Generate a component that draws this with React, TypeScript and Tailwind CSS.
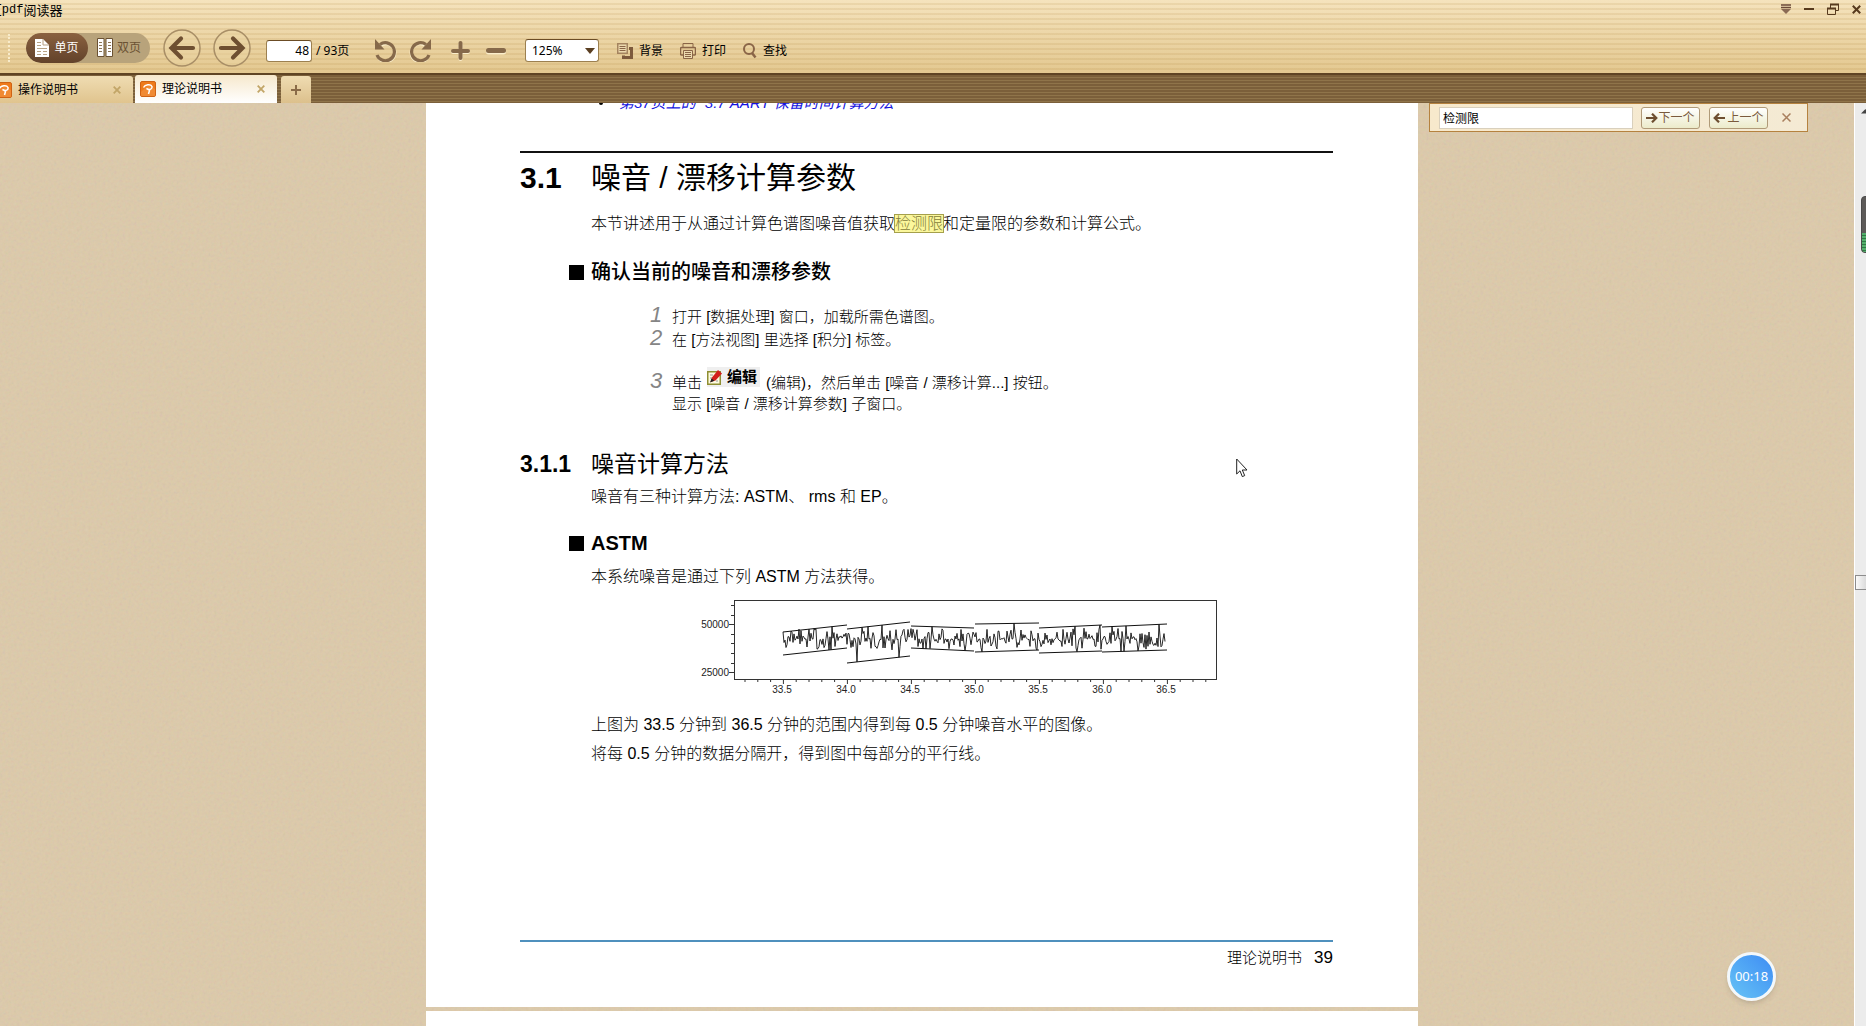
import React from "react";

const UI = "font-['Noto_Sans','Noto_Sans_CJK_SC',sans-serif]";
const DOC = "font-['Liberation_Sans','Noto_Sans_CJK_SC',sans-serif]";

/* ---------- toolbar icons ---------- */

function SinglePageIcon() {
  return (
    <svg width="14" height="18" viewBox="0 0 14 18">
      <path d="M0 0H8L14 6V18H0Z" fill="#fff" />
      <path d="M8 0V6H14" fill="none" stroke="#b79f83" />
      <path d="M2 3.5H6M2 6.5H6M2 9.5H12M2 12.5H6M8 12.5H12M2 15.5H6M8 15.5H12" stroke="#b8a285" />
    </svg>
  );
}

function DoublePageIcon() {
  return (
    <svg width="16" height="19" viewBox="0 0 16 19">
      <path d="M.5 .5H7V18.5H.5ZM9 .5H15.5V18.5H9Z" fill="#fff" stroke="#6b5233" />
      <path d="M2 4.5H5M2 7.5H5M2 10.5H5M2 13.5H5M11 4.5H14M11 7.5H14M11 10.5H14M11 13.5H14" stroke="#8a7454" />
    </svg>
  );
}

function ArrowCircle({ flip, label }: { flip?: boolean; label: string }) {
  return (
    <button aria-label={label} className="h-[38px] w-[38px]">
      <svg width="38" height="38" viewBox="0 0 38 38" className={flip ? "rotate-180" : ""}>
        <circle cx="19" cy="19" r="18" fill="#e9d3a2" fillOpacity=".5" stroke="#a88e66" strokeWidth="1.5" />
        <path d="M30 19H10M18 9.500L8.500 19L18 28.500" fill="none" stroke="#6e4f31" strokeWidth="4.200" strokeLinecap="round" strokeLinejoin="miter" />
      </svg>
    </button>
  );
}

function RotateIcon({ flip }: { flip?: boolean }) {
  return (
    <svg width="23" height="23" viewBox="0 0 23 23" className={flip ? "-scale-x-100" : ""}>
      <path d="M5.500 5.500A9 9 0 1 1 2.500 16" fill="none" stroke="#fbeecb" strokeWidth="3" transform="translate(0 1)" />
      <path d="M5 5.500A9 9 0 1 1 2 16" fill="none" stroke="#86694a" strokeWidth="3.200" />
      <path d="M0 0L0 10.500H9.500Z" fill="#86694a" />
    </svg>
  );
}

function PlusIcon() {
  return (
    <svg width="19" height="20" viewBox="0 0 19 20">
      <path d="M2 11H17M9.500 3V18" stroke="#fbeecb" strokeWidth="4" strokeLinecap="round" />
      <path d="M2 10H17M9.500 2V17" stroke="#86694a" strokeWidth="4" strokeLinecap="round" />
    </svg>
  );
}

function MinusIcon() {
  return (
    <svg width="20" height="8" viewBox="0 0 20 8">
      <path d="M2.500 5H17.500" stroke="#fbeecb" strokeWidth="5" strokeLinecap="round" />
      <path d="M2.500 3.500H17.500" stroke="#86694a" strokeWidth="5" strokeLinecap="round" />
    </svg>
  );
}

function BackgroundIcon() {
  return (
    <svg width="16" height="16" viewBox="0 0 16 16" fill="none">
      <path d="M12 5.500H14.500V14.500H6.500V12.500" stroke="#7d5a3c" strokeWidth="3" />
      <rect x=".75" y=".75" width="9.500" height="9.500" fill="#ecd9ae" stroke="#a5845f" strokeWidth="1.500" />
      <path d="M2.500 3.500H8.500M2.500 5.500H8.500M2.500 7.500H8.500" stroke="#8a6547" />
    </svg>
  );
}

function PrintIcon() {
  return (
    <svg width="16" height="16" viewBox="0 0 16 16" fill="none" stroke="#8a6547">
      <path d="M3 4V.5H13V4" />
      <path d="M3.500 12H1.500A1 1 0 0 1 .5 11V5.500A1 1 0 0 1 1.500 4.500H14.500A1 1 0 0 1 15.500 5.500V11A1 1 0 0 1 14.500 12H12.500" strokeWidth="1.500" />
      <path d="M3.500 7.500H12.500V15.500H3.500Z" fill="#ecd9ae" />
      <path d="M5 9.500H11M5 11.500H11M5 13.500H11" />
    </svg>
  );
}

function FindIcon() {
  return (
    <svg width="14" height="16" viewBox="0 0 14 16" fill="none" stroke="#8a6547">
      <circle cx="6" cy="6" r="5" strokeWidth="2" />
      <path d="M9 10L12.500 14.500" strokeWidth="2.500" />
    </svg>
  );
}

function TabLogo() {
  return (
    <svg width="16" height="16" viewBox="0 0 16 16" className="shrink-0">
      <rect x=".5" y=".5" width="15" height="15" rx="1.500" fill="#ee7a1b" stroke="#cf6314" />
      <path d="M1 11L8 4L15 8V15H1Z" fill="#f29a4c" opacity=".5" />
      <path d="M3.500 6.500C5 3.500 10.500 2.500 12 5.500C12.500 8 10 9.500 6.500 7.500L9.500 9.500L8.500 13" fill="none" stroke="#fff" strokeWidth="1.500" />
    </svg>
  );
}

function Cross({ color, size = 8 }: { color: string; size?: number }) {
  return (
    <svg width={size} height={size} viewBox="0 0 8 8">
      <path d="M.7 .7L7.300 7.300M7.300 .7L.7 7.300" stroke={color} strokeWidth="1.800" />
    </svg>
  );
}

function StepArrow({ back }: { back?: boolean }) {
  return (
    <svg width="12" height="10" viewBox="0 0 12 10" className={back ? "rotate-180" : ""}>
      <path d="M0 5H10M6 .7L10.300 5L6 9.300" fill="none" stroke="#6e4f31" strokeWidth="2.200" />
    </svg>
  );
}

/* ---------- chrome ---------- */

function TitleBar() {
  return (
    <div className="flex h-[22px] items-start justify-between pr-[5px]">
      <div className="-ml-[5px] flex text-[13px] leading-5 text-black">
        <span className="font-['Liberation_Mono',monospace]">[</span>
        <span className="-ml-px font-['Liberation_Mono',monospace] text-xs leading-5">pdf</span>
        <span>阅读器</span>
      </div>
      <div className="flex h-[18px] items-center gap-[13px]">
        <button aria-label="菜单">
          <svg width="10" height="10" viewBox="0 0 10 10">
            <path d="M0 1H10M0 3.500H10" stroke="#6b4a3a" strokeWidth="1.500" />
            <path d="M0 5H10L5 10Z" fill="#8a6a55" />
          </svg>
        </button>
        <button aria-label="最小化">
          <svg width="10" height="10" viewBox="0 0 10 10">
            <path d="M0 5H10" stroke="#573a1e" strokeWidth="2" />
          </svg>
        </button>
        <button aria-label="还原">
          <svg width="12" height="12" viewBox="0 0 12 12" fill="none" stroke="#573a1e">
            <path d="M3.500 5V1.500H11.500V7.500H9" />
            <path d="M3 1.500H12" strokeWidth="2" />
            <path d="M.5 5.500H8.500V11.500H.5Z" />
            <path d="M0 5.500H9" strokeWidth="2" />
          </svg>
        </button>
        <button aria-label="关闭">
          <Cross color="#573a1e" size={9} />
        </button>
      </div>
    </div>
  );
}

function ToolButton({ icon, text }: { icon: React.ReactNode; text: string }) {
  return (
    <button className="flex items-center gap-[6px] text-black">
      {icon}
      <span>{text}</span>
    </button>
  );
}

function Toolbar() {
  return (
    <div className="flex h-[51px] items-center pl-2 text-xs">
      <div className="h-7 border-l-2 border-dotted border-[#f8ebca]" />
      <div className="ml-4 flex h-[30px] overflow-hidden rounded-full bg-[#b8a37b]">
        <button className="flex w-[62px] items-center justify-center gap-[5px] rounded-full bg-linear-to-b from-[#8a6140] to-[#62422a] text-white">
          <SinglePageIcon />
          单页
        </button>
        <button className="flex w-[62px] items-center justify-center gap-1 text-[#6b5233]">
          <DoublePageIcon />
          双页
        </button>
      </div>
      <div className="ml-[13px] flex gap-3">
        <ArrowCircle label="后退" />
        <ArrowCircle label="前进" flip />
      </div>
      <div className="ml-[15px] flex items-center pt-[6px]">
        <input
          aria-label="页码"
          defaultValue="48"
          className="h-[22px] w-[46px] rounded-[3px] border border-[#9c8050] border-t-[#6b4c25] bg-white pr-[2px] text-right text-xs text-black outline-none"
        />
        <span className="ml-1 w-[36px] whitespace-nowrap">/ 93页</span>
        <button aria-label="向左旋转" className="ml-[23px]">
          <RotateIcon />
        </button>
        <button aria-label="向右旋转" className="ml-[10px]">
          <RotateIcon flip />
        </button>
        <button aria-label="放大" className="ml-5">
          <PlusIcon />
        </button>
        <button aria-label="缩小" className="ml-4">
          <MinusIcon />
        </button>
        <div className="relative ml-[19px]">
          <select
            aria-label="缩放比例"
            defaultValue="125%"
            className="h-[23px] w-[74px] appearance-none rounded-[3px] border border-[#9c8050] border-t-[#6b4c25] bg-white pl-[6px] text-xs text-black outline-none"
          >
            <option>100%</option>
            <option>125%</option>
            <option>150%</option>
          </select>
          <svg width="10" height="6" viewBox="0 0 10 6" className="pointer-events-none absolute top-[9px] right-1">
            <path d="M0 0H10L5 6Z" fill="#5a3f22" />
          </svg>
        </div>
        <div className="ml-[18px] flex items-center gap-[17px]">
          <ToolButton icon={<BackgroundIcon />} text="背景" />
          <ToolButton icon={<PrintIcon />} text="打印" />
          <ToolButton icon={<FindIcon />} text="查找" />
        </div>
      </div>
    </div>
  );
}

function Tab({ title, active }: { title: string; active?: boolean }) {
  return (
    <div
      className={
        active
          ? "flex h-[28px] w-[142px] items-center rounded-t-[3px] bg-linear-to-b from-[#f6e8cc] to-white pr-3 pl-[5px]"
          : "flex h-[27px] w-[142px] items-center rounded-t-[3px] bg-linear-to-b from-[#efdcb2] to-[#e0c48e] pr-3 pl-[5px]"
      }
    >
      <button className="flex flex-1 items-center gap-[6px] text-xs text-black">
        <TabLogo />
        {title}
      </button>
      <button aria-label={"关闭" + title}>
        <Cross color="#c2a567" />
      </button>
    </div>
  );
}

function TabBar() {
  return (
    <div className="flex h-[30px] items-end gap-[2px] overflow-hidden border-t-2 border-[#5f4424] bg-[repeating-linear-gradient(to_bottom,#7b5f3a_0px,#7b5f3a_2px,#8f744a_2px,#8f744a_3px)]">
      <div className="-ml-[9px] flex items-end gap-[2px]">
        <Tab title="操作说明书" />
        <Tab title="理论说明书" active />
      </div>
      <button
        aria-label="新建标签"
        className="ml-[2px] flex h-[27px] w-[30px] items-center justify-center rounded-t-[3px] bg-linear-to-b from-[#efdcb2] to-[#dcc08c]"
      >
        <svg width="10" height="10" viewBox="0 0 10 10">
          <path d="M0 5H10M5 0V10" stroke="#8a6b48" strokeWidth="2" />
        </svg>
      </button>
    </div>
  );
}

function SearchPanel() {
  const btn =
    "flex h-[22px] w-[59px] items-center justify-center rounded-[3px] border border-[#b09a78] bg-linear-to-b from-white to-[#ecebca] text-xs text-[#7a5a3c]";
  return (
    <div className="absolute top-0 right-[58px] flex h-[29px] w-[379px] items-center border border-[#b5823f] bg-linear-to-r from-[#f7e9cc] to-[#f4ead4] pl-[9px]">
      <input
        aria-label="查找内容"
        defaultValue="检测限"
        className="h-[22px] w-[194px] border border-[#d9d0bd] bg-white pl-[3px] text-xs text-black outline-none"
      />
      <button className={btn + " ml-2"}>
        <StepArrow />
        下一个
      </button>
      <button className={btn + " ml-[9px] gap-[2px]"}>
        <StepArrow back />
        上一个
      </button>
      <button aria-label="关闭查找" className="ml-[14px]">
        <svg width="9" height="9" viewBox="0 0 9 9">
          <path d="M.5 .5L8.500 8.500M8.500 .5L.5 8.500" stroke="#a97f5e" strokeWidth="1.500" />
        </svg>
      </button>
    </div>
  );
}

function ScrollBar() {
  return (
    <div className="relative w-3 shrink-0 overflow-hidden border-l border-white bg-[#ececec]">
      <svg width="8" height="5" viewBox="0 0 8 5" className="absolute top-[6px] left-[6px]">
        <path d="M0 4.500L4.500 0L9 4.500Z" fill="#444" />
      </svg>
      <div className="absolute top-[472px] left-0 h-[15px] w-4 border border-[#8c8c8c] bg-linear-to-r from-[#fafafa] to-[#cfcfcf]" />
      <div className="absolute top-[93px] left-[6px] flex h-[57px] w-3 flex-col justify-end overflow-hidden rounded-[4px] border border-[#4a4a4a] bg-[#5c5a58]">
        <div className="h-[19px] bg-[repeating-linear-gradient(to_bottom,#54b06c_0px,#54b06c_2px,#2f7a45_2px,#2f7a45_3px)]" />
      </div>
    </div>
  );
}

/* ---------- noise chart ---------- */

type Segment = {
  x0: number;
  x1: number;
  top: [number, number];
  bottom: [number, number];
  up: number[];
  down: number[];
};

const SEGMENTS: Segment[] = [
  { x0: 88, x1: 152, top: [35, 28], bottom: [58, 51], up: [96, 114, 119, 137], down: [134, 136] },
  { x0: 152, x1: 215, top: [32, 25], bottom: [66, 59], up: [167, 173, 187], down: [162, 204] },
  { x0: 216, x1: 279, top: [29, 31], bottom: [51, 54], up: [237], down: [228, 270] },
  { x0: 280, x1: 344, top: [27, 26], bottom: [55, 53], up: [319], down: [287, 342] },
  { x0: 344, x1: 407, top: [31, 28], bottom: [56, 54], up: [380, 405], down: [382] },
  { x0: 407, x1: 472, top: [30, 27], bottom: [55, 53], up: [417, 431, 464], down: [426, 429, 443] },
];

function noisePath() {
  let seed = 97;
  const rnd = () => {
    seed = (seed * 16807) % 2147483647;
    return seed / 2147483647;
  };
  const points: string[] = [];
  let sign = 1;
  for (let x = 88; x <= 470; x += 1) {
    const seg = SEGMENTS.find((s) => x >= s.x0 && x < s.x1) ?? SEGMENTS[5];
    const t = (x - seg.x0) / (seg.x1 - seg.x0);
    if (seg.up.includes(x)) {
      points.push(x + "," + (seg.top[0] + (seg.top[1] - seg.top[0]) * t).toFixed(1));
    } else if (seg.down.includes(x)) {
      points.push(x + "," + (seg.bottom[0] + (seg.bottom[1] - seg.bottom[0]) * t).toFixed(1));
    } else {
      if (rnd() < 0.5) sign = -sign;
      points.push(x + "," + (42 + sign * Math.pow(rnd(), 1.6) * 11).toFixed(1));
    }
  }
  return "M" + points.join("L");
}

const NOISE = noisePath();
const X_LABELS = ["33.5", "34.0", "34.5", "35.0", "35.5", "36.0", "36.5"];
const X_TICKS = Array.from({ length: 37 }, (_, i) => 50 + i * 12.8);

function NoiseChart() {
  return (
    <svg width="530" height="100" viewBox="0 0 530 100" role="img" aria-label="噪音图" className="mt-2 ml-[104px]">
      <rect x="39.500" y="3.500" width="482" height="79" fill="none" stroke="#333" />
      <g stroke="#333">
        {[8, 18, 37, 46, 56, 66].map((y) => (
          <path key={y} d={`M36 ${y}.5H39`} />
        ))}
        <path d="M34 27.500H39M34 75.500H39" />
        {X_TICKS.map((x, i) => (
          <path key={i} d={`M${x} 83V${i % 5 === 3 ? 87 : 85}`} />
        ))}
      </g>
      <g stroke="#111" fill="none">
        {SEGMENTS.map((s) => (
          <path key={s.x0} d={`M${s.x0} ${s.top[0]}L${s.x1} ${s.top[1]}M${s.x0} ${s.bottom[0]}L${s.x1} ${s.bottom[1]}`} />
        ))}
        <path d={NOISE} strokeWidth=".9" />
      </g>
      <g fontSize="10" fill="#222">
        <text x="34" y="31" textAnchor="end">50000</text>
        <text x="34" y="79" textAnchor="end">25000</text>
        {X_LABELS.map((t, i) => (
          <text key={t} x={87 + i * 64} y="96" textAnchor="middle">
            {t}
          </text>
        ))}
      </g>
    </svg>
  );
}

/* ---------- document ---------- */

function Square() {
  return <span className="mr-[7px] h-[15px] w-[15px] bg-black" />;
}

function Step({ n, children }: { n?: string; children: React.ReactNode }) {
  return (
    <div className="flex h-[23px] items-baseline text-[15px] leading-6">
      <span className="w-[22px] text-[22px] text-[#858585] italic">{n}</span>
      <div className="flex">{children}</div>
    </div>
  );
}

function DocumentPage() {
  return (
    <article className={"bg-white pr-[85px] pb-[37px] pl-[94px] font-light whitespace-nowrap text-black " + DOC}>
      <div className="-mt-3 flex h-6 items-center gap-4 pl-[79px] text-[15px]">
        <span className="h-1 w-1 rounded-full bg-black" />
        <a href="#aart" className="font-normal text-[#1414e0] italic">
          第37页上的 “3.7 AART 保留时间计算方法
        </a>
      </div>
      <h1 className="mt-9 flex border-t-2 border-[#111] pt-[5px] text-[30px] leading-10">
        <span className="w-[71px] font-bold">3.1</span>
        <span className="font-normal">噪音 / 漂移计算参数</span>
      </h1>
      <p className="mt-[14px] pl-[71px] text-base">
        本节讲述用于从通过计算色谱图噪音值获取
        <mark className="bg-[#fbf79c] text-[#85803a] outline-1 outline-[#a5a04c]">检测限</mark>
        和定量限的参数和计算公式。
      </p>
      <h3 className="mt-[22px] flex items-center pl-[49px] text-xl font-medium">
        <Square />
        确认当前的噪音和漂移参数
      </h3>
      <div className="mt-[17px] pl-[130px]">
        <Step n="1">打开 [数据处理] 窗口，加载所需色谱图。</Step>
        <Step n="2">在 [方法视图] 里选择 [积分] 标签。</Step>
        <div className="h-5" />
        <Step n="3">
          单击
          <span className="-mt-1 mr-[6px] ml-[5px] flex h-5 w-[53px] items-center gap-[5px] bg-[#efefef] font-bold">
            <svg width="15" height="15" viewBox="0 0 15 15">
              <rect x=".75" y="1.750" width="12.500" height="12.500" fill="#fdfbe0" stroke="#8f8f33" strokeWidth="1.500" />
              <path d="M3 5H6M3 8H5M9 11H11" stroke="#9a9a9a" />
              <path d="M3.500 12L5 7.500L11 0L15 3.500L8.500 10.500Z" fill="#d3201c" />
              <path d="M3 12.500L4.500 8.500L7.500 10.800Z" fill="#222" />
            </svg>
            编辑
          </span>
          (编辑)，然后单击 [噪音 / 漂移计算...] 按钮。
        </Step>
        <Step>显示 [噪音 / 漂移计算参数] 子窗口。</Step>
      </div>
      <h2 className="mt-[33px] flex text-[23px] leading-8">
        <span className="w-[71px] font-bold">3.1.1</span>
        <span className="font-normal">噪音计算方法</span>
      </h2>
      <p className="mt-[5px] pl-[71px] text-base">噪音有三种计算方法: ASTM、 rms 和 EP。</p>
      <h3 className="mt-5 flex items-center pl-[49px] text-xl font-bold">
        <Square />
        ASTM
      </h3>
      <div className="pl-[71px]">
        <p className="mt-2 text-base">本系统噪音是通过下列 ASTM 方法获得。</p>
        <NoiseChart />
        <p className="mt-4 text-base">上图为 33.5 分钟到 36.5 分钟的范围内得到每 0.5 分钟噪音水平的图像。</p>
        <p className="mt-[5px] text-base">将每 0.5 分钟的数据分隔开，得到图中每部分的平行线。</p>
      </div>
      <footer className="mt-[174px] flex justify-end gap-3 border-t-2 border-[#4f90bd] pt-1 text-[15px] leading-6">
        <span>理论说明书</span>
        <span className="text-[17px]">39</span>
      </footer>
    </article>
  );
}

function PaperTexture() {
  return (
    <svg className="absolute inset-0 h-full w-full opacity-12" aria-hidden="true">
      <filter id="grain">
        <feTurbulence type="fractalNoise" baseFrequency=".35" numOctaves="2" stitchTiles="stitch" />
      </filter>
      <rect width="100%" height="100%" filter="url(#grain)" />
    </svg>
  );
}

export default function App() {
  return (
    <div className={"flex h-screen flex-col overflow-hidden " + UI}>
      <header className="bg-[repeating-linear-gradient(to_bottom,transparent_0px,transparent_3px,rgba(170,125,50,0.13)_3px,rgba(170,125,50,0.13)_5px),linear-gradient(to_bottom,#f5e3bd,#e3c890)]">
        <TitleBar />
        <Toolbar />
      </header>
      <TabBar />
      <main className="relative flex min-h-0 flex-1">
        <div className="relative flex flex-1 justify-center overflow-hidden bg-[#ddcaaa] pr-[10px]">
          <PaperTexture />
          <div className="relative flex w-[992px] flex-col">
            <DocumentPage />
            <div className="mt-1 min-h-4 flex-1 bg-white" />
          </div>
        </div>
        <ScrollBar />
        <SearchPanel />
        <svg width="12" height="20" viewBox="0 0 12 20" className="absolute top-[355px] left-[1236px]">
          <path d="M.7 1V16L4 12.800L6.300 18.600L8.700 17.600L6.300 12H11Z" fill="#fff" stroke="#222" />
        </svg>
        <div className="absolute right-[90px] bottom-[25px] flex h-[49px] w-[49px] items-center justify-center rounded-full border-[3px] border-[#f3f8fb] bg-linear-to-tr from-[#67c3f5] to-[#3f8cf3] text-[13px] text-white shadow-md">
          00:18
        </div>
      </main>
    </div>
  );
}
